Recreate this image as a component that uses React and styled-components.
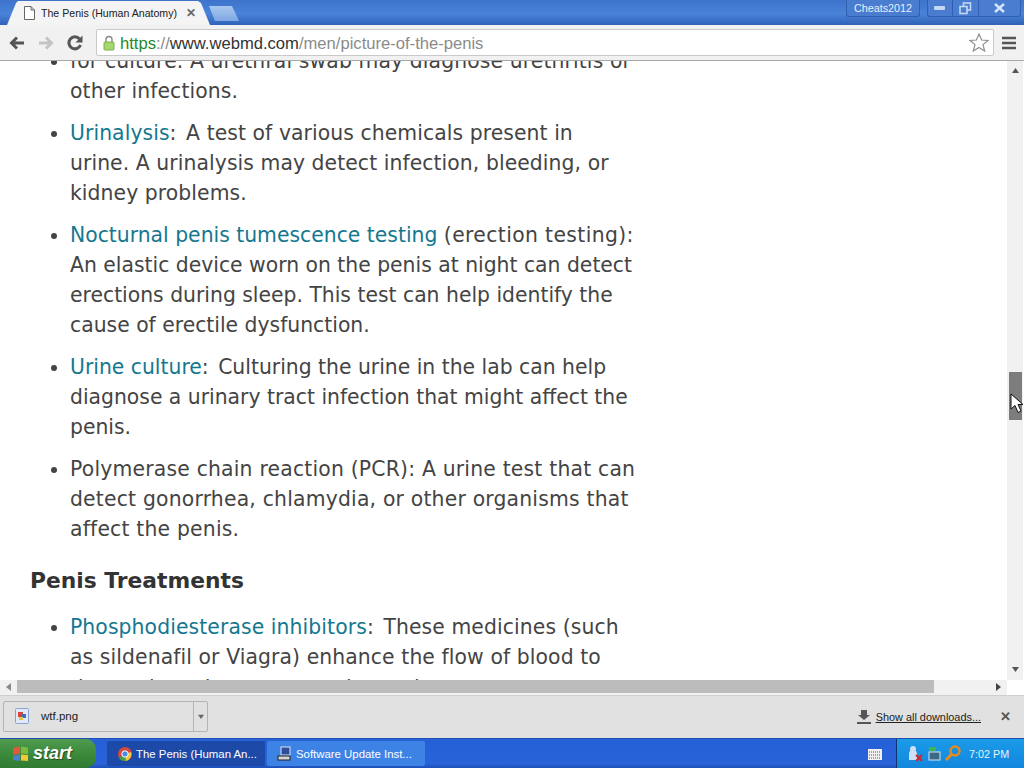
import React from 'react';
import styled, { createGlobalStyle } from 'styled-components';

const Global = createGlobalStyle`
  html, body { margin: 0; padding: 0; overflow: hidden; }
  body { font-family: "Liberation Sans", Arial, sans-serif; }
`;

const Screen = styled.div`
  width: 1024px;
  height: 768px;
  display: flex;
  flex-direction: column;
  overflow: hidden;
  background: #fff;
`;

/* window title bar + tabs */
const TitleBar = styled.div`
  height: 25px;
  flex: none;
  display: flex;
  align-items: flex-end;
  padding-left: 7px;
  background: linear-gradient(#3e73cc, #4a83d8 55%, #2f62b8);
`;

const Tab = styled.div`
  width: 203px;
  height: 24px;
  background: #f4f4f4;
  clip-path: polygon(0 100%, 9px 2px, 11px 0, 191px 0, 194px 2px, 100% 100%);
  display: flex;
  align-items: center;
  padding-left: 17px;
  box-sizing: border-box;
  font-size: 10.6px;
  color: #222;
  gap: 6px;
`;

const TabTitle = styled.span`
  width: 139px;
  white-space: nowrap;
  overflow: hidden;
`;

const TabClose = styled.span`
  font-size: 12px;
  font-weight: bold;
  color: #666;
`;

const NewTab = styled.div`
  width: 30px;
  height: 15px;
  margin: 0 0 4px -1px;
  background: linear-gradient(#a9c7ee, #7ea8e2);
  clip-path: polygon(0 0, 23px 0, 100% 100%, 6px 100%);
`;

const WindowControls = styled.div`
  margin-left: auto;
  align-self: flex-start;
  display: flex;
  margin-right: 3px;
  gap: 7px;
`;

const UserBadge = styled.div`
  width: 74px;
  height: 17px;
  box-sizing: border-box;
  border: 1px solid #2f5fae;
  border-top: none;
  border-radius: 0 0 3px 3px;
  color: #e8f0fb;
  font-size: 10.8px;
  text-align: center;
  line-height: 16px;
  background: #4a7ccf;
`;

const ControlGroup = styled.div`
  display: flex;
  height: 17px;
  box-sizing: border-box;
  border: 1px solid #2f5fae;
  border-top: none;
  border-radius: 0 0 3px 3px;
  background: #4a7ccf;
`;

const ControlButton = styled.div`
  width: ${p => p.$w}px;
  display: flex;
  align-items: center;
  justify-content: center;
  border-left: ${p => (p.$first ? 'none' : '1px solid #2f5fae')};
`;

const Toolbar = styled.div`
  height: 36px;
  flex: none;
  box-sizing: border-box;
  display: flex;
  align-items: center;
  background: #f1f1f1;
  border-bottom: 1px solid #a8a8a8;
  padding: 0 8px 0 8px;
`;

const NavIcon = styled.svg`
  width: 18px;
  height: 18px;
  flex: none;
  margin-right: 11px;
`;

const Omnibox = styled.div`
  flex: 1;
  height: 27px;
  margin: 0 8px 0 1px;
  box-sizing: border-box;
  border: 1px solid #c9c9c9;
  border-radius: 2px;
  background: #fff;
  display: flex;
  align-items: center;
  padding: 0 4px 0 6px;
`;

const Url = styled.span`
  font-size: 16.6px;
  margin-left: 5px;
  padding-top: 2px;
  color: #8b8b8b;
  flex: 1;
`;

const Scheme = styled.span`
  color: #1f8a1f;
`;

const Host = styled.span`
  color: #333;
`;

const Main = styled.div`
  flex: 1;
  min-height: 0;
  display: flex;
  overflow: hidden;
`;

const Page = styled.div`
  flex: 1;
  min-width: 0;
  overflow: hidden;
  padding-left: 30px;
  font-family: "DejaVu Sans", Verdana, sans-serif;
  font-size: 20.35px;
  line-height: 30px;
  color: #444;
`;

const ScrolledContent = styled.div`
  margin-top: -15px;
`;

const List = styled.ul`
  margin: 0;
  padding: 0 0 0 40px;
  white-space: nowrap;
`;

const Item = styled.li`
  margin-bottom: 12px;
  letter-spacing: ${p => p.$spacing || 0}px;
`;

const Link = styled.a`
  color: #14788f;
`;

const Colon = styled.span`
  margin-right: 3px;
`;

const Aside = styled.span`
  letter-spacing: 0.38px;
`;

const ClippedLine = styled.span`
  display: block;
  margin-top: 1px;
`;

const Heading = styled.h2`
  margin: 22px 0 16px;
  font-size: 21.8px;
  line-height: 30px;
  font-weight: bold;
  color: #333;
`;

const VScroll = styled.div`
  width: 17px;
  flex: none;
  box-sizing: border-box;
  background: #f1f1f1;
  border-right: 1px solid #fff;
  display: flex;
  flex-direction: column;
  position: relative;
`;

const ScrollArrow = styled.div`
  height: 17px;
  flex: none;
  display: flex;
  align-items: center;
  justify-content: center;
  margin-bottom: ${p => (p.$bottom ? 3 : 0)}px;
`;

const VThumb = styled.div`
  margin: 294px 1px 0 2px;
  height: 48px;
  background: #7d7d7d;
`;

const VSpacer = styled.div`
  flex: 1;
`;

const Cursor = styled.svg`
  position: absolute;
  left: 3px;
  top: 332px;
  width: 14px;
  height: 21px;
`;

const HScroll = styled.div`
  height: 15px;
  flex: none;
  display: flex;
  align-items: flex-start;
  background: #f1f1f1;
`;

const HArrow = styled.div`
  width: 17px;
  height: 13px;
  display: flex;
  align-items: center;
  justify-content: center;
`;

const HThumb = styled.div`
  width: 917px;
  height: 13px;
  background: #bcbcbc;
`;

const HTrackEnd = styled.div`
  width: 56px;
`;

const HCorner = styled.div`
  width: 17px;
  height: 15px;
  background: #fff;
`;

const DownloadBar = styled.div`
  height: 43px;
  flex: none;
  box-sizing: border-box;
  border-top: 1px solid #cfcfcf;
  background: #e1e1e1;
  display: flex;
  align-items: center;
  padding: 0 13px 2px 3px;
  font-size: 11.5px;
  color: #222;
`;

const DownloadItem = styled.div`
  width: 205px;
  height: 31px;
  box-sizing: border-box;
  border: 1px solid #b4b4b4;
  border-radius: 2px;
  display: flex;
  align-items: center;
`;

const FileCell = styled.div`
  flex: 1;
  display: flex;
  align-items: center;
  gap: 11px;
  padding-left: 11px;
`;

const MenuCell = styled.div`
  width: 13px;
  height: 100%;
  border-left: 1px solid #b4b4b4;
  display: flex;
  align-items: center;
  justify-content: center;
`;

const ShowAll = styled.a`
  margin-left: auto;
  display: flex;
  align-items: center;
  gap: 5px;
  color: #222;
  font-size: 10.9px;
  padding-top: 1px;
`;

const ShowAllText = styled.span`
  text-decoration: underline;
`;

const CloseBar = styled.span`
  margin-left: 19px;
  font-weight: bold;
  font-size: 13px;
  color: #555;
`;

/* windows xp taskbar */
const Taskbar = styled.div`
  height: 30px;
  flex: none;
  display: flex;
  align-items: stretch;
  background: linear-gradient(#2a66d8 0, #2560d6 8%, #2a63d9 85%, #1c4fb8);
  border-top: 1px solid #1f4fb0;
  box-sizing: border-box;
  color: #fff;
  font-size: 11.4px;
`;

const StartButton = styled.div`
  width: 96px;
  flex: none;
  box-sizing: border-box;
  display: flex;
  align-items: center;
  gap: 3px;
  padding-left: 11px;
  background: linear-gradient(#4f9a4f, #3c8b3c 50%, #2f7b32);
  border-radius: 0 10px 10px 0;
  font: italic bold 18px "Liberation Sans", Arial, sans-serif;
  text-shadow: 1px 1px 1px #1f4f1f;
`;

const TaskButtons = styled.div`
  display: flex;
  margin-left: 11px;
  gap: 2px;
  align-items: center;
`;

const TaskButton = styled.div`
  width: ${p => p.$w}px;
  height: 25px;
  box-sizing: border-box;
  border-radius: 2px;
  display: flex;
  align-items: center;
  gap: 4px;
  padding-left: ${p => (p.$active ? 11 : 10)}px;
  background: ${p => (p.$active ? '#1d4aa8' : '#3d83e6')};
  white-space: nowrap;
`;

const KeyboardIcon = styled.svg`
  margin-left: auto;
  margin-right: 14px;
  align-self: center;
`;

const Tray = styled.div`
  width: 128px;
  flex: none;
  box-sizing: border-box;
  display: flex;
  align-items: center;
  gap: 3px;
  padding-left: 11px;
  background: linear-gradient(#1a9be8, #1287dd);
  border-left: 1px solid #12316f;
`;

const Clock = styled.span`
  margin-left: 5px;
  font-size: 10.8px;
  color: #e6f3fc;
`;

const Triangle = ({ dir, color = '#555', size = 7 }) => {
  const pts = { up: '0,7 7,7 3.5,2', down: '0,2 7,2 3.5,7', left: '6,0 6,8 1,4', right: '1,0 1,8 6,4' };
  return (
    <svg width={size} height={size + 1} viewBox="0 0 7 8">
      <polygon points={pts[dir]} fill={color} />
    </svg>
  );
};

export default function App() {
  return (
    <Screen>
      <Global />
      <TitleBar>
        <Tab>
          <svg width="11" height="14" viewBox="0 0 11 14">
            <path d="M.5.5h6.5l3.5 3.5v9.5h-10z M7 .5v3.5h3.5" fill="#fff" stroke="#666" />
          </svg>
          <TabTitle>The Penis (Human Anatomy)</TabTitle>
          <TabClose>✕</TabClose>
        </Tab>
        <NewTab />
        <WindowControls>
          <UserBadge>Cheats2012</UserBadge>
          <ControlGroup>
            <ControlButton $w={24} $first>
              <svg width="12" height="6"><rect y="1" width="11" height="4" rx="1" fill="#c4d8f3" /></svg>
            </ControlButton>
            <ControlButton $w={25}>
              <svg width="13" height="13" viewBox="0 0 13 13" fill="none" stroke="#c4d8f3" strokeWidth="1.6">
                <rect x="4.5" y="1" width="7" height="7" />
                <rect x="1" y="4.5" width="7" height="7" fill="#4a7ccf" />
              </svg>
            </ControlButton>
            <ControlButton $w={41}>
              <svg width="11" height="10" viewBox="0 0 11 10"><path d="M1 1l9 8M10 1l-9 8" stroke="#d5e4f8" strokeWidth="2.4" /></svg>
            </ControlButton>
          </ControlGroup>
        </WindowControls>
      </TitleBar>

      <Toolbar>
        <NavIcon viewBox="0 0 18 18"><path d="M16 9H4M9 3.5L3.5 9 9 14.5" fill="none" stroke="#555" strokeWidth="3" /></NavIcon>
        <NavIcon viewBox="0 0 18 18"><path d="M2 9h12M9 3.5L14.5 9 9 14.5" fill="none" stroke="#c4c4c4" strokeWidth="3" /></NavIcon>
        <NavIcon viewBox="0 0 18 18">
          <path d="M14.5 11a6 6 0 1 1-1-6" fill="none" stroke="#555" strokeWidth="3" />
          <polygon points="16.5,1.5 16.5,8.5 9.5,8.5" fill="#555" />
        </NavIcon>
        <Omnibox>
          <svg width="12" height="16" viewBox="0 0 12 16">
            <path d="M3 7V4.5a3 3 0 0 1 6 0V7" fill="none" stroke="#888" strokeWidth="1.4" />
            <rect x="1" y="7" width="10" height="8" rx="1" fill="#a6d66e" stroke="#7fae4e" />
          </svg>
          <Url>
            <Scheme>https</Scheme>://<Host>www.webmd.com</Host>/men/picture-of-the-penis
          </Url>
          <svg width="20" height="19" viewBox="0 0 20 19">
            <polygon points="10,1 12.6,7 19,7.5 14,11.6 15.7,18 10,14.5 4.3,18 6,11.6 1,7.5 7.4,7" fill="#fff" stroke="#8f8f8f" strokeWidth="1.2" />
          </svg>
        </Omnibox>
        <svg width="14" height="14" viewBox="0 0 14 14">
          <path d="M0 2h14M0 7h14M0 12h14" stroke="#555" strokeWidth="2.6" />
        </svg>
      </Toolbar>

      <Main>
        <Page>
          <ScrolledContent>
            <List>
              <Item $spacing={0.12}>for culture. A urethral swab may diagnose urethritis or<br />other infections.</Item>
              <Item $spacing={0.08}><Link>Urinalysis</Link><Colon>:</Colon> A test of various chemicals present in<br />urine. A urinalysis may detect infection, bleeding, or<br />kidney problems.</Item>
              <Item><Link>Nocturnal penis tumescence testing</Link> <Aside>(erection testing):</Aside><br />An elastic device worn on the penis at night can detect<br />erections during sleep. This test can help identify the<br />cause of erectile dysfunction.</Item>
              <Item><Link>Urine culture</Link><Colon>:</Colon> Culturing the urine in the lab can help<br />diagnose a urinary tract infection that might affect the<br />penis.</Item>
              <Item $spacing={0.2}>Polymerase chain reaction (PCR): A urine test that can<br />detect gonorrhea, chlamydia, or other organisms that<br />affect the penis.</Item>
            </List>
            <Heading>Penis Treatments</Heading>
            <List>
              <Item $spacing={0.1}><Link>Phosphodiesterase inhibitors</Link><Colon>:</Colon> These medicines (such<br />as sildenafil or Viagra) enhance the flow of blood to<ClippedLine>the penis and are commonly used to treat</ClippedLine></Item>
            </List>
          </ScrolledContent>
        </Page>
        <VScroll>
          <ScrollArrow><Triangle dir="up" /></ScrollArrow>
          <VThumb />
          <VSpacer />
          <ScrollArrow $bottom><Triangle dir="down" /></ScrollArrow>
          <Cursor viewBox="0 0 14 21">
            <path d="M1 1v15l4-3.5 3 7 3-1.5-3-6.5h5z" fill="#fff" stroke="#111" />
          </Cursor>
        </VScroll>
      </Main>

      <HScroll>
        <HArrow><Triangle dir="left" color="#888" /></HArrow>
        <HThumb />
        <HTrackEnd />
        <HArrow><Triangle dir="right" color="#444" /></HArrow>
        <HCorner />
      </HScroll>

      <DownloadBar>
        <DownloadItem>
          <FileCell>
            <svg width="15" height="17" viewBox="0 0 15 17">
              <rect x=".5" y=".5" width="13" height="15" rx="1" fill="#dfe9f7" stroke="#8aa4c8" />
              <rect x="3" y="4" width="5" height="5" fill="#d8443a" />
              <rect x="7" y="6" width="4" height="4" fill="#3b6fc4" />
              <rect x="4" y="9" width="4" height="3" fill="#e2c64a" />
            </svg>
            wtf.png
          </FileCell>
          <MenuCell><Triangle dir="down" color="#666" size={6} /></MenuCell>
        </DownloadItem>
        <ShowAll>
          <svg width="14" height="14" viewBox="0 0 14 14">
            <path d="M4 0h6v5h3L7 10 1 5h3z" fill="#555" />
            <rect y="12" width="14" height="2" fill="#555" />
          </svg>
          <ShowAllText>Show all downloads...</ShowAllText>
        </ShowAll>
        <CloseBar>✕</CloseBar>
      </DownloadBar>

      <Taskbar>
        <StartButton>
          <svg width="19" height="18" viewBox="0 0 19 18">
            <path d="M2 3l7-1.5v7L2 10z" fill="#e2583a" />
            <path d="M10 1.5l7 1v6.5l-7-.5z" fill="#7cba3d" />
            <path d="M2 11l7-1.5V16l-7-1z" fill="#4a7fd4" />
            <path d="M10 9.5l7 .5v6l-7-.5z" fill="#f3c53a" />
          </svg>
          start
        </StartButton>
        <TaskButtons>
          <TaskButton $w={158} $active>
            <svg width="14" height="14" viewBox="0 0 14 14">
              <circle cx="7" cy="7" r="7" fill="#d8483c" />
              <path d="M7 7L1 11a7 7 0 0 0 7 3z" fill="#3ea14a" />
              <path d="M7 7l6-2a7 7 0 0 1-5 9z" fill="#f2c93a" />
              <circle cx="7" cy="7" r="3.2" fill="#4a8ae0" stroke="#fff" />
            </svg>
            The Penis (Human An...
          </TaskButton>
          <TaskButton $w={158}>
            <svg width="15" height="16" viewBox="0 0 15 16">
              <rect x="4" y="1" width="9" height="8" fill="#2f4f9a" stroke="#dfe6f4" />
              <rect x="1" y="10" width="12" height="4" fill="#d5d5d5" stroke="#222" />
            </svg>
            Software Update Inst...
          </TaskButton>
        </TaskButtons>
        <KeyboardIcon width="14" height="13" viewBox="0 0 14 13">
          <rect y="2" width="14" height="11" fill="#f0f0f0" />
          <path d="M1 5h12M1 8h12M1 11h12" stroke="#555" strokeDasharray="1 1" />
        </KeyboardIcon>
        <Tray>
          <svg width="15" height="17" viewBox="0 0 15 17">
            <circle cx="5" cy="4" r="3" fill="#cfe0f6" />
            <path d="M1 15V9a4 4 0 0 1 8 0v6z" fill="#cfe0f6" />
            <path d="M8 10l6 6M14 10l-6 6" stroke="#d0282a" strokeWidth="2" />
          </svg>
          <svg width="15" height="16" viewBox="0 0 15 16">
            <path d="M3 1h7v4H3z" fill="#3fb54a" />
            <rect x="3" y="6" width="11" height="8" fill="#3c6a86" stroke="#dde" />
          </svg>
          <svg width="17" height="17" viewBox="0 0 17 17" fill="none">
            <circle cx="11" cy="6" r="4.5" stroke="#e88a1e" strokeWidth="2.4" />
            <path d="M7.5 9.5L2 15" stroke="#e88a1e" strokeWidth="3" />
          </svg>
          <Clock>7:02 PM</Clock>
        </Tray>
      </Taskbar>
    </Screen>
  );
}
